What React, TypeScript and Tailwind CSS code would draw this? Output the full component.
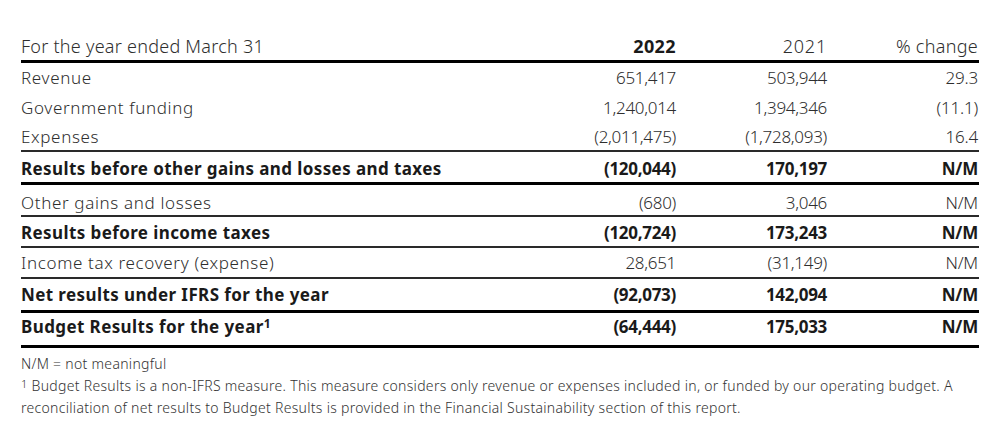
import React from "react";

type Row = {
  label: React.ReactNode;
  a: string;
  b: string;
  c: string;
  bold?: boolean;
  border?: "none" | "thin" | "thick";
  h: string;
  pad?: string;
};

const rows: Row[] = [
  { label: "Revenue", a: "651,417", b: "503,944", c: "29.3", border: "none", h: "h-[30px]" },
  { label: "Government funding", a: "1,240,014", b: "1,394,346", c: "(11.1)", border: "none", h: "h-[30px]" },
  { label: "Expenses", a: "(2,011,475)", b: "(1,728,093)", c: "16.4", border: "thin", h: "h-[29px]" },
  {
    label: "Results before other gains and losses and taxes",
    a: "(120,044)",
    b: "170,197",
    c: "N/M",
    bold: true,
    border: "thick",
    h: "h-[33px]",
    pad: "pt-[3px]",
  },
  { label: "Other gains and losses", a: "(680)", b: "3,046", c: "N/M", border: "thin", h: "h-[32px]", pad: "pt-[5px]" },
  {
    label: "Results before income taxes",
    a: "(120,724)",
    b: "173,243",
    c: "N/M",
    bold: true,
    border: "thin",
    h: "h-[31px]",
    pad: "pt-[2px]",
  },
  { label: "Income tax recovery (expense)", a: "28,651", b: "(31,149)", c: "N/M", border: "thin", h: "h-[31px]", pad: "pt-[1px]" },
  {
    label: "Net results under IFRS for the year",
    a: "(92,073)",
    b: "142,094",
    c: "N/M",
    bold: true,
    border: "thick",
    h: "h-[34px]",
  },
  {
    label: (
      <>
        Budget Results for the year<span className="text-[12px] leading-none align-[5px]">1</span>
      </>
    ),
    a: "(64,444)",
    b: "175,033",
    c: "N/M",
    bold: true,
    border: "thick",
    h: "h-[35px]",
    pad: "pb-[4px]",
  },
];

function borderClass(b?: string) {
  if (b === "thin") return "border-b-2 border-[#2a2a2a]";
  if (b === "thick") return "border-b-[3px] border-black";
  return "";
}

export default function App() {
  return (
    <div
      className="w-[1002px] h-[426px] bg-white pt-[30px] pl-[21px] text-[17px] text-[#2e2e2e]"
      style={{ fontFamily: '"Noto Sans", "Open Sans", sans-serif' }}
    >
      <div className="w-[958px]">
        <div className="grid grid-cols-[1fr_151px_151px_152px] items-center h-[33px] border-b-[3px] border-black font-light text-[18px] pt-[2px]">
          <div className="tracking-[0.25px]">For the year ended March 31</div>
          <div className="text-right font-bold tracking-[0.4px] text-[#1a1a1a]">2022</div>
          <div className="text-right tracking-[0.8px]">2021</div>
          <div className="text-right pr-px tracking-[0.3px]">% change</div>
        </div>
        {rows.map((r, i) => (
          <div
            key={i}
            className={`grid grid-cols-[1fr_151px_151px_152px] items-center ${r.h} ${r.pad ?? ""} ${borderClass(r.border)} ${
              r.bold ? "font-bold text-[#1a1a1a]" : "font-light"
            }`}
          >
            <div className={r.bold ? "tracking-[0.4px]" : "tracking-[0.65px]"}>{r.label}</div>
            <div className="text-right tracking-[-0.3px]">{r.a}</div>
            <div className="text-right tracking-[-0.3px]">{r.b}</div>
            <div className="text-right pr-px tracking-[-0.2px]">{r.c}</div>
          </div>
        ))}
      </div>
      <div className="mt-[5px] text-[14px] tracking-[0.3px] font-light text-[#333]">
        <div className="h-[22px] leading-[22px]">N/M = not meaningful</div>
        <div className="h-[22px] leading-[22px]">
          <span className="text-[11px] leading-none align-[3px]">1</span> Budget Results is a non-IFRS measure. This measure considers
          only revenue or expenses included in, or funded by our operating budget. A
        </div>
        <div className="h-[22px] leading-[22px]">
          reconciliation of net results to Budget Results is provided in the Financial Sustainability section of this report.
        </div>
      </div>
    </div>
  );
}
